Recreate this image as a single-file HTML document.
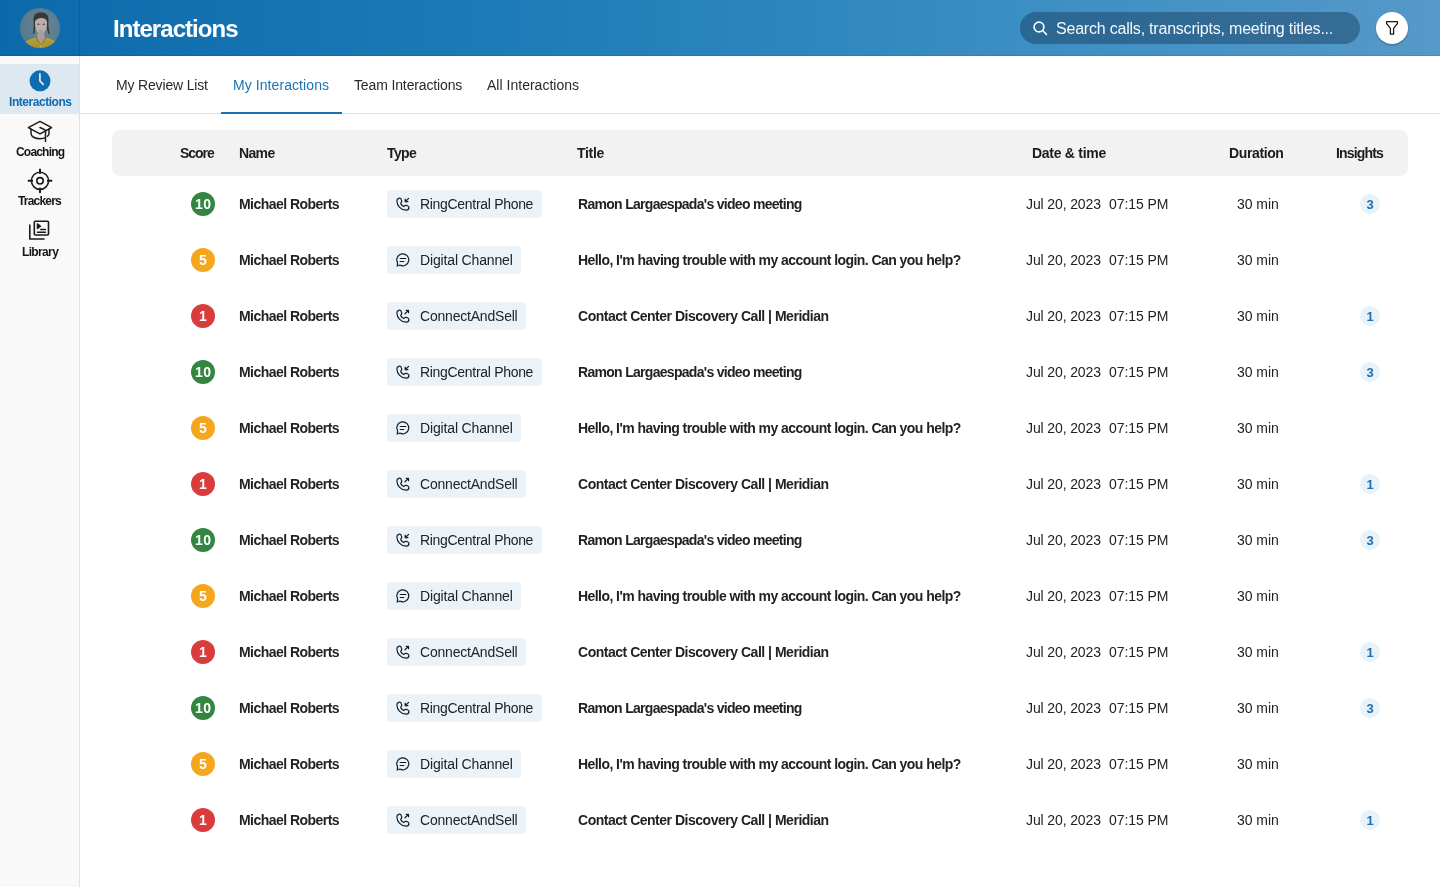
<!DOCTYPE html>
<html><head><meta charset="utf-8"><title>Interactions</title>
<style>
*{margin:0;padding:0;box-sizing:border-box}
html,body{width:1440px;height:887px;overflow:hidden;background:#fff;font-family:"Liberation Sans", sans-serif}
.abs{position:absolute}
.t{position:absolute;white-space:nowrap;line-height:1;will-change:transform}

#hdr{position:absolute;left:0;top:0;width:1440px;height:56px;background:linear-gradient(90deg,#0c6aab 0%,#1d7bb7 35%,#3b8ec3 70%,#5599c8 100%);border-bottom:1px solid rgba(0,30,70,0.12)}
#hsep{position:absolute;left:79px;top:0;width:1px;height:56px;background:rgba(0,0,0,0.12)}
#side{position:absolute;left:0;top:56px;width:80px;height:831px;background:#f9f9f9;border-right:1px solid #e2e2e2}
.active{left:0;top:64px;width:79px;height:50px;background:#dde8f0}
.search{left:1020px;top:12px;width:340px;height:32px;border-radius:16px;background:rgba(20,50,80,0.42)}
.fbtn{left:1376px;top:12px;width:32px;height:32px;border-radius:50%;background:#fff;box-shadow:0 1px 2px rgba(0,0,0,0.3)}
.tabline{left:80px;top:113px;width:1360px;height:1px;background:#e0e0e0}
.tabul{left:221px;top:112px;width:121px;height:2px;background:#1a6fb0}
.thead{left:112px;top:130px;width:1296px;height:46px;border-radius:8px;background:#f2f2f2}
.score{will-change:transform;width:24px;height:24px;border-radius:50%;color:#fff;font-weight:700;font-size:14px;line-height:25px;text-align:center}
.pill{height:28px;border-radius:4px;background:#ebf2f8}
.ins{will-change:transform;width:20px;height:20px;border-radius:50%;background:#e8f2f9;color:#1a72b5;font-weight:700;font-size:13px;line-height:21px;text-align:center}
</style></head><body>
<div id="hdr"></div><div id="hsep"></div><div id="side"></div>
<svg class="abs" style="left:20px;top:8px" width="40" height="40" viewBox="0 0 40 40">
<defs><clipPath id="ac"><circle cx="20" cy="20" r="20"/></clipPath>
<radialGradient id="abg" cx="55%" cy="45%" r="65%"><stop offset="0" stop-color="#6a8898"/><stop offset="1" stop-color="#54758a"/></radialGradient>
<linearGradient id="shirt" x1="0" y1="0" x2="0" y2="1"><stop offset="0" stop-color="#b9a238"/><stop offset="1" stop-color="#a88f2c"/></linearGradient></defs>
<g clip-path="url(#ac)">
<rect width="40" height="40" fill="url(#abg)"/>
<path d="M13.5 12.5 C13 6.5 16 4.6 21 4.6 C26 4.6 29 7 28.5 13 C28.2 17 28.6 21 29.8 25.5 L28.3 26 C27.3 23 26.8 20 26.6 17 L15.5 17 C15.3 20 15 23 14.2 26 L12.8 25.5 C13.6 21.5 13.8 16.5 13.5 12.5Z" fill="#35393c"/>
<path d="M15 15 C15 10.5 17.5 9.5 21 9.5 C24.5 9.5 27 10.5 27 15 C27 21 24.5 26 21 26 C17.5 26 15 21 15 15Z" fill="#bcaea9"/>
<path d="M14.6 13.5 C15.5 9 18 7.2 21 7.3 C24.5 7.4 26.5 9.5 27.4 13 C25.5 10.5 23 9.8 21 10 C18.5 10.2 16.5 11 14.6 13.5Z" fill="#35393c"/>
<ellipse cx="18.3" cy="16.3" rx="1.3" ry="0.7" fill="#4a5560"/>
<ellipse cx="23.7" cy="16.3" rx="1.3" ry="0.7" fill="#4a5560"/>
<path d="M19.3 22.8 Q21 23.5 22.7 22.8" stroke="#9a7f80" stroke-width="0.9" fill="none"/>
<path d="M17.8 24 L24.2 24 L25 31 L21 37 L17 31Z" fill="#ab9c96"/>
<path d="M2 40 L4 34.5 C7 32.5 11 31 15 29.5 L17.5 31 L21 36.5 L24.5 31 L27 29.5 C31 31 34.5 32.5 37.5 34.5 L40 40Z" fill="url(#shirt)"/>
<path d="M15 29.5 L17.5 31 L21 36.5 L18.5 34.5 Z M27 29.5 L24.5 31 L21 36.5 L23.5 34.5Z" fill="#8d7a2a"/>
<circle cx="21" cy="38.5" r="0.6" fill="#e8e0c0"/>
</g></svg>
<div class="t" style="left:112.50px;top:16.88px;font-size:24px;font-weight:700;color:#ffffff;letter-spacing:-0.953px;">Interactions</div>
<div class="abs search"></div>
<svg class="abs" style="left:1031px;top:19px" width="18" height="18" viewBox="0 0 18 18" fill="none" stroke="#fff" stroke-width="1.6" stroke-linecap="round"><circle cx="8" cy="8" r="4.9"/><path d="M11.8 11.8 L15.4 15.4"/></svg>
<div class="t" style="left:1056.40px;top:20.76px;font-size:16px;color:#f4f8fb;letter-spacing:-0.210px;">Search calls, transcripts, meeting titles...</div>
<div class="abs fbtn"></div>
<svg class="abs" style="left:1384px;top:20px" width="16" height="16" viewBox="0 0 16 16" fill="none" stroke="#1a1a1a" stroke-width="1.3" stroke-linejoin="round"><path d="M2.6 1.7 H13.4 V3.6 L9.6 8.4 V14.2 H6.4 V8.4 L2.6 3.6 Z"/></svg>
<div class="abs active"></div>
<svg class="abs" style="left:29px;top:70px" width="22" height="22" viewBox="0 0 22 22"><circle cx="11" cy="10.8" r="10.5" fill="#0d6dae"/><path d="M10.9 3.9 V10.9 L14.2 14.4" fill="none" stroke="#d6e4ee" stroke-width="1.8" stroke-linecap="round" stroke-linejoin="round"/></svg>
<div class="t" style="left:8.60px;top:95.84px;font-size:12px;font-weight:700;color:#0d6dae;letter-spacing:-0.458px;">Interactions</div>
<svg class="abs" style="left:26px;top:118px" width="28" height="26" viewBox="0 0 28 26" fill="none" stroke="#1a1a1a" stroke-width="1.5" stroke-linejoin="round" stroke-linecap="round"><path d="M2.3 9.6 L14 3.4 L25.6 9.6 L14 15.9 Z"/><path d="M5 11.2 V15.5 C5 18.5 9 20.7 14 20.7 C16.5 20.7 18.5 20.2 19.5 19.5"/><path d="M23 11.1 V15.5 C23 16.5 22.5 17.5 21.5 18.2"/><path d="M14 9.5 L19.5 12.2 V23.4"/></svg>
<div class="t" style="left:15.60px;top:145.84px;font-size:12px;font-weight:700;color:#161616;letter-spacing:-0.809px;">Coaching</div>
<svg class="abs" style="left:27px;top:168px" width="26" height="26" viewBox="0 0 26 26" fill="none" stroke="#1a1a1a" stroke-width="1.6" stroke-linecap="round"><circle cx="13" cy="12.8" r="8.6"/><circle cx="13" cy="12.8" r="3.2"/><path d="M13 1.4 V5 M13 20.6 V24.2 M1.6 12.8 H5.2 M20.8 12.8 H24.4" stroke-width="2"/></svg>
<div class="t" style="left:18.30px;top:195.44px;font-size:12px;font-weight:700;color:#161616;letter-spacing:-0.811px;">Trackers</div>
<svg class="abs" style="left:26px;top:218px" width="28" height="24" viewBox="0 0 28 24" fill="none" stroke="#1a1a1a" stroke-width="1.6" stroke-linejoin="round" stroke-linecap="round"><rect x="8.3" y="3.2" width="14.2" height="13.8" rx="1"/><path d="M3.8 7 V21 H18"/><path d="M11.4 5.8 L14.6 8.2 L11.4 10.6 Z" fill="#1a1a1a" stroke-width="1.3"/><path d="M14.8 11.4 H19.4 M11.4 14.2 H19.4" stroke-width="1.5"/></svg>
<div class="t" style="left:21.70px;top:245.54px;font-size:12px;font-weight:700;color:#161616;letter-spacing:-0.647px;">Library</div>
<div class="abs tabline"></div>
<div class="abs tabul"></div>
<div class="t" style="left:116.30px;top:78.15px;font-size:14px;color:#2a2a2a;letter-spacing:-0.165px;">My Review List</div>
<div class="t" style="left:233.30px;top:78.15px;font-size:14px;color:#1a73b3;letter-spacing:0.077px;">My Interactions</div>
<div class="t" style="left:354.40px;top:78.15px;font-size:14px;color:#2a2a2a;letter-spacing:-0.133px;">Team Interactions</div>
<div class="t" style="left:487.20px;top:78.15px;font-size:14px;color:#2a2a2a;letter-spacing:0.017px;">All Interactions</div>
<div class="abs thead"></div>
<div class="t" style="left:180.00px;top:146.15px;font-size:14px;font-weight:700;color:#1c1c1c;letter-spacing:-1.055px;">Score</div>
<div class="t" style="left:239.40px;top:146.15px;font-size:14px;font-weight:700;color:#1c1c1c;letter-spacing:-0.650px;">Name</div>
<div class="t" style="left:387.20px;top:146.15px;font-size:14px;font-weight:700;color:#1c1c1c;letter-spacing:-0.613px;">Type</div>
<div class="t" style="left:577.40px;top:146.15px;font-size:14px;font-weight:700;color:#1c1c1c;letter-spacing:-0.290px;">Title</div>
<div class="t" style="left:1031.70px;top:146.15px;font-size:14px;font-weight:700;color:#1c1c1c;letter-spacing:-0.280px;">Date &amp; time</div>
<div class="t" style="left:1228.60px;top:146.15px;font-size:14px;font-weight:700;color:#1c1c1c;letter-spacing:-0.377px;">Duration</div>
<div class="t" style="left:1336.25px;top:146.15px;font-size:14px;font-weight:700;color:#1c1c1c;letter-spacing:-0.827px;">Insights</div>
<div class="abs score" style="left:191px;top:192px;background:#338541;letter-spacing:0.6px;text-indent:0.6px">10</div>
<div class="t" style="left:239.40px;top:197.15px;font-size:14px;font-weight:700;color:#222222;letter-spacing:-0.539px;">Michael Roberts</div>
<div class="abs pill" style="left:387px;top:190px;width:155.0px"></div>
<div class="abs" style="left:395px;top:196px;width:16px;height:16px"><svg width="16" height="16" viewBox="0 0 16 16" fill="none" stroke="#1a1a1a" stroke-width="1.2" stroke-linejoin="round" stroke-linecap="round"><path d="M4.6 2.2 C3.2 2.2 1.9 3.3 1.9 4.9 C1.9 9.9 6.2 14.2 11.2 14.2 C12.8 14.2 13.9 13 13.9 11.6 C13.9 10.7 13.2 10.1 12.4 9.8 L11.2 9.4 C10.5 9.2 9.9 9.4 9.5 9.9 C9.2 10.3 8.7 10.5 8.2 10.2 C7.1 9.6 6.5 9 5.9 7.9 C5.6 7.4 5.8 6.9 6.2 6.6 C6.7 6.2 6.9 5.6 6.7 4.9 L6.3 3.7 C6.1 2.8 5.4 2.2 4.6 2.2 Z"/><path d="M13.6 2.4 L10.4 5.5 M10.2 3.1 V5.7 H12.8"/></svg></div>
<div class="t" style="left:419.60px;top:197.15px;font-size:14px;color:#222222;letter-spacing:-0.306px;">RingCentral Phone</div>
<div class="t" style="left:577.60px;top:197.15px;font-size:14px;font-weight:700;color:#222222;letter-spacing:-0.701px;">Ramon Largaespada's video meeting</div>
<div class="t" style="left:1026.10px;top:197.15px;font-size:14px;color:#222222;letter-spacing:-0.118px;">Jul 20, 2023</div>
<div class="t" style="left:1109.40px;top:197.15px;font-size:14px;color:#222222;letter-spacing:-0.060px;">07:15 PM</div>
<div class="t" style="left:1236.70px;top:197.15px;font-size:14px;color:#222222;letter-spacing:-0.060px;">30 min</div>
<div class="abs ins" style="left:1360px;top:194px">3</div>
<div class="abs score" style="left:191px;top:248px;background:#f4a71d;">5</div>
<div class="t" style="left:239.40px;top:253.15px;font-size:14px;font-weight:700;color:#222222;letter-spacing:-0.539px;">Michael Roberts</div>
<div class="abs pill" style="left:387px;top:246px;width:133.7px"></div>
<div class="abs" style="left:395px;top:252px;width:16px;height:16px"><svg width="16" height="16" viewBox="0 0 16 16" fill="none" stroke="#1a1a1a" stroke-width="1.2" stroke-linejoin="round" stroke-linecap="round"><path d="M2.6 10.8 A6 6 0 1 1 4.8 13 L2.2 14 Z"/><path d="M5.2 6.5 H10.75 M5.2 9.5 H8.8"/></svg></div>
<div class="t" style="left:419.60px;top:253.15px;font-size:14px;color:#222222;letter-spacing:-0.151px;">Digital Channel</div>
<div class="t" style="left:577.60px;top:253.15px;font-size:14px;font-weight:700;color:#222222;letter-spacing:-0.555px;">Hello, I'm having trouble with my account login. Can you help?</div>
<div class="t" style="left:1026.10px;top:253.15px;font-size:14px;color:#222222;letter-spacing:-0.118px;">Jul 20, 2023</div>
<div class="t" style="left:1109.40px;top:253.15px;font-size:14px;color:#222222;letter-spacing:-0.060px;">07:15 PM</div>
<div class="t" style="left:1236.70px;top:253.15px;font-size:14px;color:#222222;letter-spacing:-0.060px;">30 min</div>
<div class="abs score" style="left:191px;top:304px;background:#d93c3b;">1</div>
<div class="t" style="left:239.40px;top:309.15px;font-size:14px;font-weight:700;color:#222222;letter-spacing:-0.539px;">Michael Roberts</div>
<div class="abs pill" style="left:387px;top:302px;width:138.7px"></div>
<div class="abs" style="left:395px;top:308px;width:16px;height:16px"><svg width="16" height="16" viewBox="0 0 16 16" fill="none" stroke="#1a1a1a" stroke-width="1.2" stroke-linejoin="round" stroke-linecap="round"><path d="M4.6 2.2 C3.2 2.2 1.9 3.3 1.9 4.9 C1.9 9.9 6.2 14.2 11.2 14.2 C12.8 14.2 13.9 13 13.9 11.6 C13.9 10.7 13.2 10.1 12.4 9.8 L11.2 9.4 C10.5 9.2 9.9 9.4 9.5 9.9 C9.2 10.3 8.7 10.5 8.2 10.2 C7.1 9.6 6.5 9 5.9 7.9 C5.6 7.4 5.8 6.9 6.2 6.6 C6.7 6.2 6.9 5.6 6.7 4.9 L6.3 3.7 C6.1 2.8 5.4 2.2 4.6 2.2 Z"/><path d="M10 5.8 L13.5 2.4 M11.2 2.4 H13.5 V4.7"/></svg></div>
<div class="t" style="left:419.60px;top:309.15px;font-size:14px;color:#222222;letter-spacing:-0.206px;">ConnectAndSell</div>
<div class="t" style="left:577.60px;top:309.15px;font-size:14px;font-weight:700;color:#222222;letter-spacing:-0.484px;">Contact Center Discovery Call | Meridian</div>
<div class="t" style="left:1026.10px;top:309.15px;font-size:14px;color:#222222;letter-spacing:-0.118px;">Jul 20, 2023</div>
<div class="t" style="left:1109.40px;top:309.15px;font-size:14px;color:#222222;letter-spacing:-0.060px;">07:15 PM</div>
<div class="t" style="left:1236.70px;top:309.15px;font-size:14px;color:#222222;letter-spacing:-0.060px;">30 min</div>
<div class="abs ins" style="left:1360px;top:306px">1</div>
<div class="abs score" style="left:191px;top:360px;background:#338541;letter-spacing:0.6px;text-indent:0.6px">10</div>
<div class="t" style="left:239.40px;top:365.15px;font-size:14px;font-weight:700;color:#222222;letter-spacing:-0.539px;">Michael Roberts</div>
<div class="abs pill" style="left:387px;top:358px;width:155.0px"></div>
<div class="abs" style="left:395px;top:364px;width:16px;height:16px"><svg width="16" height="16" viewBox="0 0 16 16" fill="none" stroke="#1a1a1a" stroke-width="1.2" stroke-linejoin="round" stroke-linecap="round"><path d="M4.6 2.2 C3.2 2.2 1.9 3.3 1.9 4.9 C1.9 9.9 6.2 14.2 11.2 14.2 C12.8 14.2 13.9 13 13.9 11.6 C13.9 10.7 13.2 10.1 12.4 9.8 L11.2 9.4 C10.5 9.2 9.9 9.4 9.5 9.9 C9.2 10.3 8.7 10.5 8.2 10.2 C7.1 9.6 6.5 9 5.9 7.9 C5.6 7.4 5.8 6.9 6.2 6.6 C6.7 6.2 6.9 5.6 6.7 4.9 L6.3 3.7 C6.1 2.8 5.4 2.2 4.6 2.2 Z"/><path d="M13.6 2.4 L10.4 5.5 M10.2 3.1 V5.7 H12.8"/></svg></div>
<div class="t" style="left:419.60px;top:365.15px;font-size:14px;color:#222222;letter-spacing:-0.306px;">RingCentral Phone</div>
<div class="t" style="left:577.60px;top:365.15px;font-size:14px;font-weight:700;color:#222222;letter-spacing:-0.701px;">Ramon Largaespada's video meeting</div>
<div class="t" style="left:1026.10px;top:365.15px;font-size:14px;color:#222222;letter-spacing:-0.118px;">Jul 20, 2023</div>
<div class="t" style="left:1109.40px;top:365.15px;font-size:14px;color:#222222;letter-spacing:-0.060px;">07:15 PM</div>
<div class="t" style="left:1236.70px;top:365.15px;font-size:14px;color:#222222;letter-spacing:-0.060px;">30 min</div>
<div class="abs ins" style="left:1360px;top:362px">3</div>
<div class="abs score" style="left:191px;top:416px;background:#f4a71d;">5</div>
<div class="t" style="left:239.40px;top:421.15px;font-size:14px;font-weight:700;color:#222222;letter-spacing:-0.539px;">Michael Roberts</div>
<div class="abs pill" style="left:387px;top:414px;width:133.7px"></div>
<div class="abs" style="left:395px;top:420px;width:16px;height:16px"><svg width="16" height="16" viewBox="0 0 16 16" fill="none" stroke="#1a1a1a" stroke-width="1.2" stroke-linejoin="round" stroke-linecap="round"><path d="M2.6 10.8 A6 6 0 1 1 4.8 13 L2.2 14 Z"/><path d="M5.2 6.5 H10.75 M5.2 9.5 H8.8"/></svg></div>
<div class="t" style="left:419.60px;top:421.15px;font-size:14px;color:#222222;letter-spacing:-0.151px;">Digital Channel</div>
<div class="t" style="left:577.60px;top:421.15px;font-size:14px;font-weight:700;color:#222222;letter-spacing:-0.555px;">Hello, I'm having trouble with my account login. Can you help?</div>
<div class="t" style="left:1026.10px;top:421.15px;font-size:14px;color:#222222;letter-spacing:-0.118px;">Jul 20, 2023</div>
<div class="t" style="left:1109.40px;top:421.15px;font-size:14px;color:#222222;letter-spacing:-0.060px;">07:15 PM</div>
<div class="t" style="left:1236.70px;top:421.15px;font-size:14px;color:#222222;letter-spacing:-0.060px;">30 min</div>
<div class="abs score" style="left:191px;top:472px;background:#d93c3b;">1</div>
<div class="t" style="left:239.40px;top:477.15px;font-size:14px;font-weight:700;color:#222222;letter-spacing:-0.539px;">Michael Roberts</div>
<div class="abs pill" style="left:387px;top:470px;width:138.7px"></div>
<div class="abs" style="left:395px;top:476px;width:16px;height:16px"><svg width="16" height="16" viewBox="0 0 16 16" fill="none" stroke="#1a1a1a" stroke-width="1.2" stroke-linejoin="round" stroke-linecap="round"><path d="M4.6 2.2 C3.2 2.2 1.9 3.3 1.9 4.9 C1.9 9.9 6.2 14.2 11.2 14.2 C12.8 14.2 13.9 13 13.9 11.6 C13.9 10.7 13.2 10.1 12.4 9.8 L11.2 9.4 C10.5 9.2 9.9 9.4 9.5 9.9 C9.2 10.3 8.7 10.5 8.2 10.2 C7.1 9.6 6.5 9 5.9 7.9 C5.6 7.4 5.8 6.9 6.2 6.6 C6.7 6.2 6.9 5.6 6.7 4.9 L6.3 3.7 C6.1 2.8 5.4 2.2 4.6 2.2 Z"/><path d="M10 5.8 L13.5 2.4 M11.2 2.4 H13.5 V4.7"/></svg></div>
<div class="t" style="left:419.60px;top:477.15px;font-size:14px;color:#222222;letter-spacing:-0.206px;">ConnectAndSell</div>
<div class="t" style="left:577.60px;top:477.15px;font-size:14px;font-weight:700;color:#222222;letter-spacing:-0.484px;">Contact Center Discovery Call | Meridian</div>
<div class="t" style="left:1026.10px;top:477.15px;font-size:14px;color:#222222;letter-spacing:-0.118px;">Jul 20, 2023</div>
<div class="t" style="left:1109.40px;top:477.15px;font-size:14px;color:#222222;letter-spacing:-0.060px;">07:15 PM</div>
<div class="t" style="left:1236.70px;top:477.15px;font-size:14px;color:#222222;letter-spacing:-0.060px;">30 min</div>
<div class="abs ins" style="left:1360px;top:474px">1</div>
<div class="abs score" style="left:191px;top:528px;background:#338541;letter-spacing:0.6px;text-indent:0.6px">10</div>
<div class="t" style="left:239.40px;top:533.15px;font-size:14px;font-weight:700;color:#222222;letter-spacing:-0.539px;">Michael Roberts</div>
<div class="abs pill" style="left:387px;top:526px;width:155.0px"></div>
<div class="abs" style="left:395px;top:532px;width:16px;height:16px"><svg width="16" height="16" viewBox="0 0 16 16" fill="none" stroke="#1a1a1a" stroke-width="1.2" stroke-linejoin="round" stroke-linecap="round"><path d="M4.6 2.2 C3.2 2.2 1.9 3.3 1.9 4.9 C1.9 9.9 6.2 14.2 11.2 14.2 C12.8 14.2 13.9 13 13.9 11.6 C13.9 10.7 13.2 10.1 12.4 9.8 L11.2 9.4 C10.5 9.2 9.9 9.4 9.5 9.9 C9.2 10.3 8.7 10.5 8.2 10.2 C7.1 9.6 6.5 9 5.9 7.9 C5.6 7.4 5.8 6.9 6.2 6.6 C6.7 6.2 6.9 5.6 6.7 4.9 L6.3 3.7 C6.1 2.8 5.4 2.2 4.6 2.2 Z"/><path d="M13.6 2.4 L10.4 5.5 M10.2 3.1 V5.7 H12.8"/></svg></div>
<div class="t" style="left:419.60px;top:533.15px;font-size:14px;color:#222222;letter-spacing:-0.306px;">RingCentral Phone</div>
<div class="t" style="left:577.60px;top:533.15px;font-size:14px;font-weight:700;color:#222222;letter-spacing:-0.701px;">Ramon Largaespada's video meeting</div>
<div class="t" style="left:1026.10px;top:533.15px;font-size:14px;color:#222222;letter-spacing:-0.118px;">Jul 20, 2023</div>
<div class="t" style="left:1109.40px;top:533.15px;font-size:14px;color:#222222;letter-spacing:-0.060px;">07:15 PM</div>
<div class="t" style="left:1236.70px;top:533.15px;font-size:14px;color:#222222;letter-spacing:-0.060px;">30 min</div>
<div class="abs ins" style="left:1360px;top:530px">3</div>
<div class="abs score" style="left:191px;top:584px;background:#f4a71d;">5</div>
<div class="t" style="left:239.40px;top:589.15px;font-size:14px;font-weight:700;color:#222222;letter-spacing:-0.539px;">Michael Roberts</div>
<div class="abs pill" style="left:387px;top:582px;width:133.7px"></div>
<div class="abs" style="left:395px;top:588px;width:16px;height:16px"><svg width="16" height="16" viewBox="0 0 16 16" fill="none" stroke="#1a1a1a" stroke-width="1.2" stroke-linejoin="round" stroke-linecap="round"><path d="M2.6 10.8 A6 6 0 1 1 4.8 13 L2.2 14 Z"/><path d="M5.2 6.5 H10.75 M5.2 9.5 H8.8"/></svg></div>
<div class="t" style="left:419.60px;top:589.15px;font-size:14px;color:#222222;letter-spacing:-0.151px;">Digital Channel</div>
<div class="t" style="left:577.60px;top:589.15px;font-size:14px;font-weight:700;color:#222222;letter-spacing:-0.555px;">Hello, I'm having trouble with my account login. Can you help?</div>
<div class="t" style="left:1026.10px;top:589.15px;font-size:14px;color:#222222;letter-spacing:-0.118px;">Jul 20, 2023</div>
<div class="t" style="left:1109.40px;top:589.15px;font-size:14px;color:#222222;letter-spacing:-0.060px;">07:15 PM</div>
<div class="t" style="left:1236.70px;top:589.15px;font-size:14px;color:#222222;letter-spacing:-0.060px;">30 min</div>
<div class="abs score" style="left:191px;top:640px;background:#d93c3b;">1</div>
<div class="t" style="left:239.40px;top:645.15px;font-size:14px;font-weight:700;color:#222222;letter-spacing:-0.539px;">Michael Roberts</div>
<div class="abs pill" style="left:387px;top:638px;width:138.7px"></div>
<div class="abs" style="left:395px;top:644px;width:16px;height:16px"><svg width="16" height="16" viewBox="0 0 16 16" fill="none" stroke="#1a1a1a" stroke-width="1.2" stroke-linejoin="round" stroke-linecap="round"><path d="M4.6 2.2 C3.2 2.2 1.9 3.3 1.9 4.9 C1.9 9.9 6.2 14.2 11.2 14.2 C12.8 14.2 13.9 13 13.9 11.6 C13.9 10.7 13.2 10.1 12.4 9.8 L11.2 9.4 C10.5 9.2 9.9 9.4 9.5 9.9 C9.2 10.3 8.7 10.5 8.2 10.2 C7.1 9.6 6.5 9 5.9 7.9 C5.6 7.4 5.8 6.9 6.2 6.6 C6.7 6.2 6.9 5.6 6.7 4.9 L6.3 3.7 C6.1 2.8 5.4 2.2 4.6 2.2 Z"/><path d="M10 5.8 L13.5 2.4 M11.2 2.4 H13.5 V4.7"/></svg></div>
<div class="t" style="left:419.60px;top:645.15px;font-size:14px;color:#222222;letter-spacing:-0.206px;">ConnectAndSell</div>
<div class="t" style="left:577.60px;top:645.15px;font-size:14px;font-weight:700;color:#222222;letter-spacing:-0.484px;">Contact Center Discovery Call | Meridian</div>
<div class="t" style="left:1026.10px;top:645.15px;font-size:14px;color:#222222;letter-spacing:-0.118px;">Jul 20, 2023</div>
<div class="t" style="left:1109.40px;top:645.15px;font-size:14px;color:#222222;letter-spacing:-0.060px;">07:15 PM</div>
<div class="t" style="left:1236.70px;top:645.15px;font-size:14px;color:#222222;letter-spacing:-0.060px;">30 min</div>
<div class="abs ins" style="left:1360px;top:642px">1</div>
<div class="abs score" style="left:191px;top:696px;background:#338541;letter-spacing:0.6px;text-indent:0.6px">10</div>
<div class="t" style="left:239.40px;top:701.15px;font-size:14px;font-weight:700;color:#222222;letter-spacing:-0.539px;">Michael Roberts</div>
<div class="abs pill" style="left:387px;top:694px;width:155.0px"></div>
<div class="abs" style="left:395px;top:700px;width:16px;height:16px"><svg width="16" height="16" viewBox="0 0 16 16" fill="none" stroke="#1a1a1a" stroke-width="1.2" stroke-linejoin="round" stroke-linecap="round"><path d="M4.6 2.2 C3.2 2.2 1.9 3.3 1.9 4.9 C1.9 9.9 6.2 14.2 11.2 14.2 C12.8 14.2 13.9 13 13.9 11.6 C13.9 10.7 13.2 10.1 12.4 9.8 L11.2 9.4 C10.5 9.2 9.9 9.4 9.5 9.9 C9.2 10.3 8.7 10.5 8.2 10.2 C7.1 9.6 6.5 9 5.9 7.9 C5.6 7.4 5.8 6.9 6.2 6.6 C6.7 6.2 6.9 5.6 6.7 4.9 L6.3 3.7 C6.1 2.8 5.4 2.2 4.6 2.2 Z"/><path d="M13.6 2.4 L10.4 5.5 M10.2 3.1 V5.7 H12.8"/></svg></div>
<div class="t" style="left:419.60px;top:701.15px;font-size:14px;color:#222222;letter-spacing:-0.306px;">RingCentral Phone</div>
<div class="t" style="left:577.60px;top:701.15px;font-size:14px;font-weight:700;color:#222222;letter-spacing:-0.701px;">Ramon Largaespada's video meeting</div>
<div class="t" style="left:1026.10px;top:701.15px;font-size:14px;color:#222222;letter-spacing:-0.118px;">Jul 20, 2023</div>
<div class="t" style="left:1109.40px;top:701.15px;font-size:14px;color:#222222;letter-spacing:-0.060px;">07:15 PM</div>
<div class="t" style="left:1236.70px;top:701.15px;font-size:14px;color:#222222;letter-spacing:-0.060px;">30 min</div>
<div class="abs ins" style="left:1360px;top:698px">3</div>
<div class="abs score" style="left:191px;top:752px;background:#f4a71d;">5</div>
<div class="t" style="left:239.40px;top:757.15px;font-size:14px;font-weight:700;color:#222222;letter-spacing:-0.539px;">Michael Roberts</div>
<div class="abs pill" style="left:387px;top:750px;width:133.7px"></div>
<div class="abs" style="left:395px;top:756px;width:16px;height:16px"><svg width="16" height="16" viewBox="0 0 16 16" fill="none" stroke="#1a1a1a" stroke-width="1.2" stroke-linejoin="round" stroke-linecap="round"><path d="M2.6 10.8 A6 6 0 1 1 4.8 13 L2.2 14 Z"/><path d="M5.2 6.5 H10.75 M5.2 9.5 H8.8"/></svg></div>
<div class="t" style="left:419.60px;top:757.15px;font-size:14px;color:#222222;letter-spacing:-0.151px;">Digital Channel</div>
<div class="t" style="left:577.60px;top:757.15px;font-size:14px;font-weight:700;color:#222222;letter-spacing:-0.555px;">Hello, I'm having trouble with my account login. Can you help?</div>
<div class="t" style="left:1026.10px;top:757.15px;font-size:14px;color:#222222;letter-spacing:-0.118px;">Jul 20, 2023</div>
<div class="t" style="left:1109.40px;top:757.15px;font-size:14px;color:#222222;letter-spacing:-0.060px;">07:15 PM</div>
<div class="t" style="left:1236.70px;top:757.15px;font-size:14px;color:#222222;letter-spacing:-0.060px;">30 min</div>
<div class="abs score" style="left:191px;top:808px;background:#d93c3b;">1</div>
<div class="t" style="left:239.40px;top:813.15px;font-size:14px;font-weight:700;color:#222222;letter-spacing:-0.539px;">Michael Roberts</div>
<div class="abs pill" style="left:387px;top:806px;width:138.7px"></div>
<div class="abs" style="left:395px;top:812px;width:16px;height:16px"><svg width="16" height="16" viewBox="0 0 16 16" fill="none" stroke="#1a1a1a" stroke-width="1.2" stroke-linejoin="round" stroke-linecap="round"><path d="M4.6 2.2 C3.2 2.2 1.9 3.3 1.9 4.9 C1.9 9.9 6.2 14.2 11.2 14.2 C12.8 14.2 13.9 13 13.9 11.6 C13.9 10.7 13.2 10.1 12.4 9.8 L11.2 9.4 C10.5 9.2 9.9 9.4 9.5 9.9 C9.2 10.3 8.7 10.5 8.2 10.2 C7.1 9.6 6.5 9 5.9 7.9 C5.6 7.4 5.8 6.9 6.2 6.6 C6.7 6.2 6.9 5.6 6.7 4.9 L6.3 3.7 C6.1 2.8 5.4 2.2 4.6 2.2 Z"/><path d="M10 5.8 L13.5 2.4 M11.2 2.4 H13.5 V4.7"/></svg></div>
<div class="t" style="left:419.60px;top:813.15px;font-size:14px;color:#222222;letter-spacing:-0.206px;">ConnectAndSell</div>
<div class="t" style="left:577.60px;top:813.15px;font-size:14px;font-weight:700;color:#222222;letter-spacing:-0.484px;">Contact Center Discovery Call | Meridian</div>
<div class="t" style="left:1026.10px;top:813.15px;font-size:14px;color:#222222;letter-spacing:-0.118px;">Jul 20, 2023</div>
<div class="t" style="left:1109.40px;top:813.15px;font-size:14px;color:#222222;letter-spacing:-0.060px;">07:15 PM</div>
<div class="t" style="left:1236.70px;top:813.15px;font-size:14px;color:#222222;letter-spacing:-0.060px;">30 min</div>
<div class="abs ins" style="left:1360px;top:810px">1</div>
</body></html>
